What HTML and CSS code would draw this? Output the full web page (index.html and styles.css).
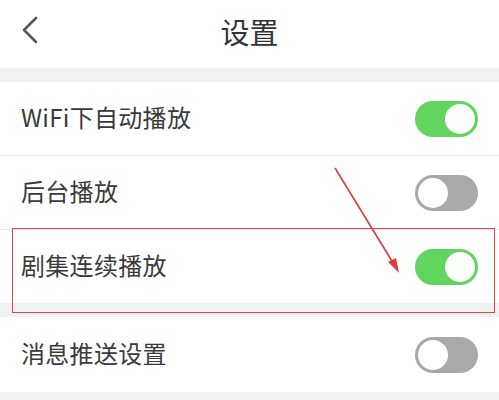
FILE: index.html
```html
<!DOCTYPE html>
<html lang="zh">
<head>
<meta charset="utf-8">
<link rel="stylesheet" href="styles.css">
</head>
<body>
<div class="page">
  <header class="topbar">
    <svg class="back" width="20" height="30" viewBox="0 0 20 30"><path d="M16 3 L4 15 L16 27" fill="none" stroke="#555" stroke-width="2.6" stroke-linecap="round" stroke-linejoin="round"/></svg>
    <h1 class="title">设置</h1>
  </header>
  <div class="band"></div>
  <section class="group">
    <div class="row"><span class="label">WiFi下自动播放</span><span class="toggle on"><span class="knob"></span></span></div>
    <div class="row"><span class="label">后台播放</span><span class="toggle off"><span class="knob"></span></span></div>
    <div class="row"><span class="label">剧集连续播放</span><span class="toggle on"><span class="knob"></span></span></div>
  </section>
  <div class="band"></div>
  <section class="group">
    <div class="row tall"><span class="label">消息推送设置</span><span class="toggle off"><span class="knob"></span></span></div>
  </section>
  <div class="band end"></div>

  <div class="highlight"></div>
  <svg class="arrow" width="499" height="400" viewBox="0 0 499 400">
    <line x1="335" y1="168" x2="395" y2="266" stroke="#e03a3a" stroke-width="1.6"/>
    <path d="M399 273 L388 262 L396 258 Z" fill="#e03a3a"/>
  </svg>
</div>
</body>
</html>
```
FILE: styles.css
```css
html, body {
  margin: 0;
  padding: 0;
  background: #ffffff;
}
body {
  font-family: "Noto Sans CJK SC", "Noto Sans", sans-serif;
  color: #333333;
}
.page {
  position: relative;
  width: 499px;
  height: 400px;
  overflow: hidden;
}
.topbar {
  height: 68px;
  display: flex;
  align-items: center;
  justify-content: center;
  position: relative;
  background: #fff;
}
.back {
  position: absolute;
  left: 20px;
  top: 15px;
}
.title {
  margin: 0;
  font-size: 29px;
  font-weight: 400;
  color: #333;
  line-height: 1;
  margin-bottom: 6px;
}
.band {
  height: 14px;
  background: #f1f1f1;
}
.band.end {
  height: 20px;
}
.group {
  background: #fff;
}
.row {
  height: 73px;
  display: flex;
  align-items: center;
  justify-content: space-between;
  padding: 0 21px 0 21px;
  border-bottom: 1px solid #e8e8e8;
}
.group .row:last-child {
  border-bottom: none;
}
.row.tall {
  height: 75px;
}
.label {
  font-size: 24px;
  letter-spacing: 0.3px;
  color: #3a3a3a;
  margin-bottom: 5px;
}
.toggle {
  position: relative;
  width: 63px;
  height: 36px;
  border-radius: 18px;
  box-sizing: border-box;
}
.toggle.on {
  background: #62d55f;
}
.toggle.off {
  background: #a9a9a9;
}
.knob {
  position: absolute;
  top: 1px;
  width: 34px;
  height: 34px;
  border-radius: 50%;
  background: #fff;
  box-sizing: border-box;
}
.toggle.on .knob {
  right: 1px;
  border: 2px solid #62d55f;
}
.toggle.off .knob {
  left: 1px;
  border: 2px solid #a9a9a9;
}
.highlight {
  position: absolute;
  left: 12px;
  top: 228px;
  width: 483px;
  height: 85px;
  border: 1.5px solid #e0474b;
  box-sizing: border-box;
}
.arrow {
  position: absolute;
  left: 0;
  top: 0;
  pointer-events: none;
}
```
